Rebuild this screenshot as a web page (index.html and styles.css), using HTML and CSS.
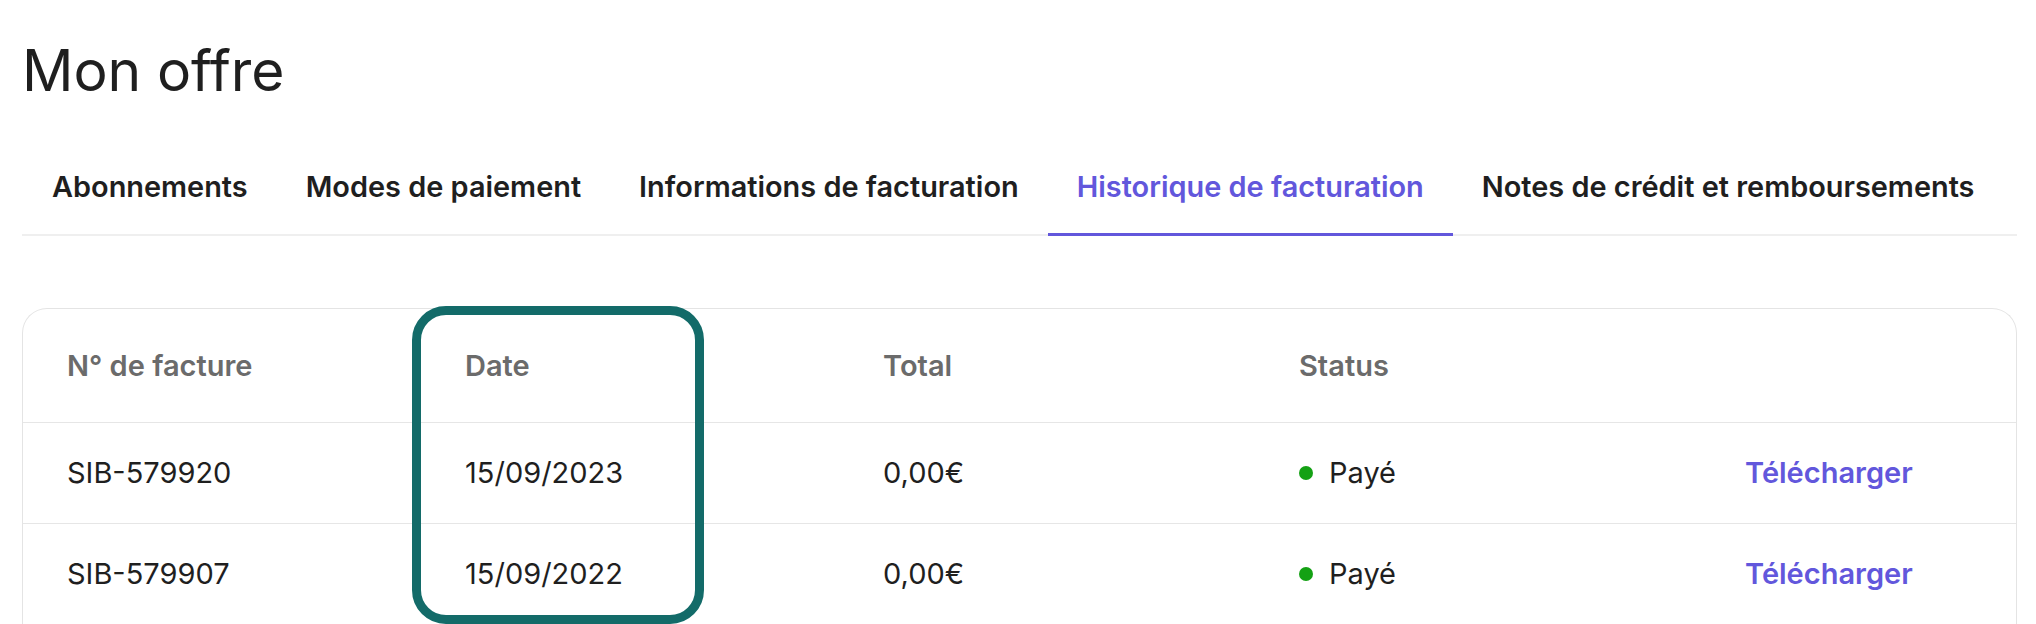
FILE: index.html
```html
<!DOCTYPE html>
<html lang="fr">
<head>
<meta charset="utf-8">
<title>Mon offre</title>
<link rel="stylesheet" href="styles.css">
</head>
<body>
<main class="page">
  <h1 class="title">Mon offre</h1>
  <nav class="tabs">
    <a class="tab">Abonnements</a>
    <a class="tab">Modes de paiement</a>
    <a class="tab">Informations de facturation</a>
    <a class="tab active">Historique de facturation</a>
    <a class="tab">Notes de crédit et remboursements</a>
  </nav>
  <section class="card">
    <div class="row head">
      <div class="cell">N° de facture</div>
      <div class="cell">Date</div>
      <div class="cell">Total</div>
      <div class="cell">Status</div>
      <div class="cell"></div>
    </div>
    <div class="row">
      <div class="cell">SIB-579920</div>
      <div class="cell">15/09/2023</div>
      <div class="cell">0,00€</div>
      <div class="cell status"><span class="dot"></span>Payé</div>
      <div class="cell"><a class="link">Télécharger</a></div>
    </div>
    <div class="row">
      <div class="cell">SIB-579907</div>
      <div class="cell">15/09/2022</div>
      <div class="cell">0,00€</div>
      <div class="cell status"><span class="dot"></span>Payé</div>
      <div class="cell"><a class="link">Télécharger</a></div>
    </div>
    <div class="highlight"></div>
  </section>
</main>
</body>
</html>
```
FILE: styles.css
```css
html, body {
  margin: 0;
  padding: 0;
  background: #ffffff;
}
body {
  font-family: Inter, "Noto Sans", "Liberation Sans", sans-serif;
  color: #1f1f1f;
  height: 624px;
  overflow: hidden;
}
.page {
  padding: 0 19px 0 22px;
}
.title {
  margin: 37px 0 0 0;
  font-size: 57px;
  line-height: 68px;
  font-weight: 400;
  letter-spacing: -0.1px;
  color: #1f1f1f;
}
.tabs {
  display: flex;
  margin-top: 65px;
  border-bottom: 2px solid #efefef;
}
.tab {
  display: block;
  flex: 0 0 auto;
  white-space: nowrap;
  padding: 0 29px 29px;
  margin-bottom: -2px;
  border-bottom: 3px solid transparent;
  font-size: 28.9px;
  line-height: 34px;
  font-weight: 600;
  color: #1f1f1f;
}
.tab:first-child {
  padding-left: 30px;
}
.tab.active {
  color: #6257dc;
  border-bottom-color: #6257dc;
}
.card {
  position: relative;
  margin-top: 72px;
  border: 1px solid #e4e4e4;
  border-bottom: none;
  border-radius: 25px 25px 0 0;
  height: 320px;
}
.row {
  display: grid;
  grid-template-columns: 398px 418px 416px 446px 1fr;
  align-items: center;
  padding-left: 44px;
  height: 100px;
  border-top: 1px solid #e6e6e6;
  font-size: 29px;
  line-height: 34px;
  white-space: nowrap;
}
.row.head {
  height: 113px;
  border-top: none;
  font-weight: 600;
  color: #6b6b6b;
}
.status {
  display: flex;
  align-items: center;
}
.dot {
  width: 14px;
  height: 14px;
  border-radius: 50%;
  background: #14a114;
  margin-right: 16px;
}
.link {
  color: #6257dc;
  font-weight: 600;
}
.highlight {
  position: absolute;
  left: 389px;
  top: -3px;
  width: 274px;
  height: 300px;
  border: 9px solid #136b69;
  border-radius: 34px;
}
```
